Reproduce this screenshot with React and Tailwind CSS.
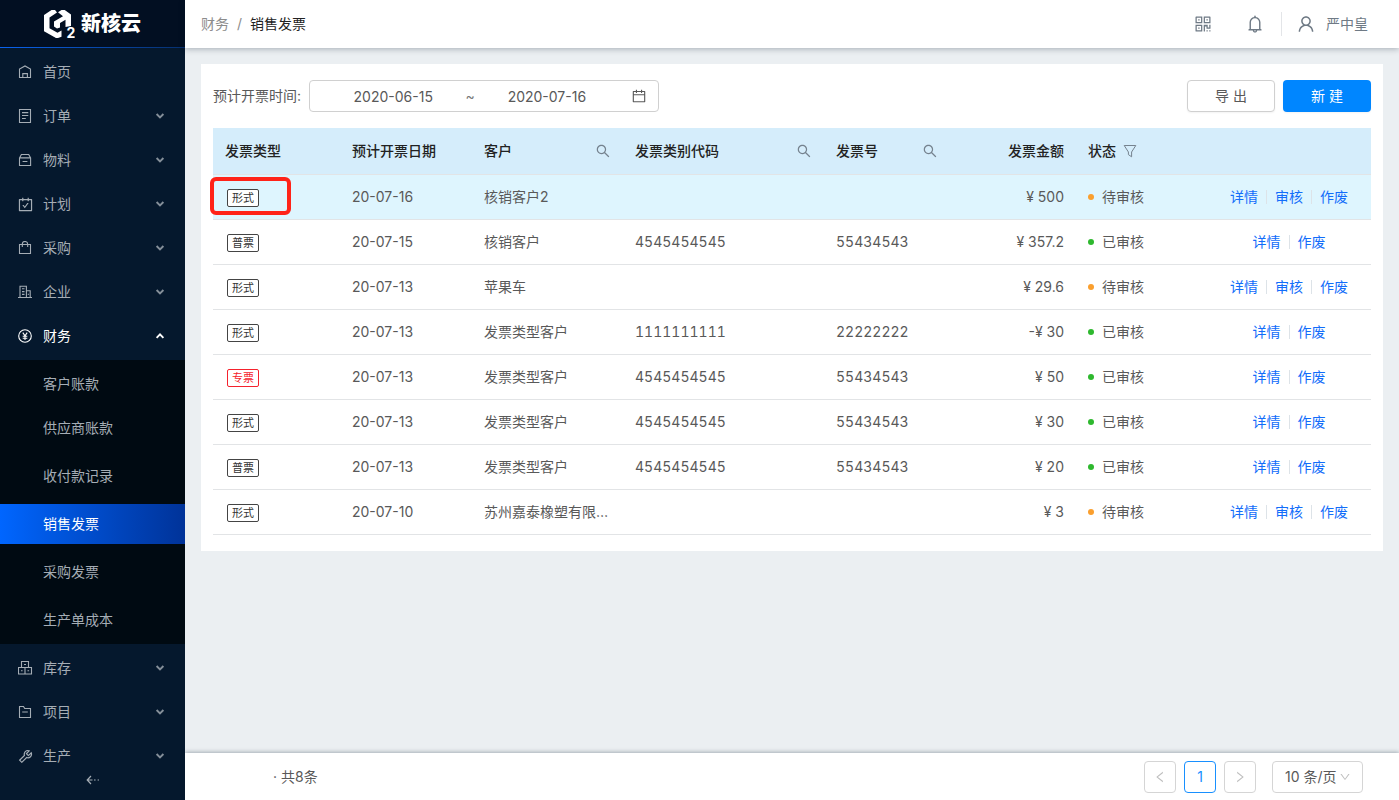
import React, { useState } from 'react';
import {
  AiOutlineBell,
  AiOutlineCalendar,
  AiOutlineCarryOut,
  AiOutlineDown,
  AiOutlineLeft,
  AiOutlineQrcode,
  AiOutlineRight,
  AiOutlineSearch,
  AiOutlineTool,
  AiOutlineUser,
} from 'react-icons/ai';

const LineIcon = ({ children }) => (
  <svg className="size-[15px]" viewBox="0 0 15 15" fill="none" stroke="currentColor" strokeWidth="1.1" aria-hidden="true">
    {children}
  </svg>
);

const icons = {
  home: (
    <LineIcon>
      <path d="M1.5 12.5V4.1L7 1l5.5 3.1v8.4zM4.8 12.5V8.6h4.6v3.9" />
    </LineIcon>
  ),
  order: (
    <LineIcon>
      <path d="M1.5.5h11v13h-11zM4 3.6h6.3M4 6.5h6.3M4 9.5h3.8" />
    </LineIcon>
  ),
  box: (
    <LineIcon>
      <path d="M1.5 4.9 3.4 1.5h7.3l1.9 3.4v7.6H1.5zM1.5 4.9h11M4.6 8.5h4.8" />
    </LineIcon>
  ),
  plan: <AiOutlineCarryOut className="-mx-px size-[17px]" />,
  bag: (
    <LineIcon>
      <path d="M1.5 3.5h11v9h-11zM4.3 6V3.2a2.7 2.7 0 0 1 5.4 0V6" />
    </LineIcon>
  ),
  company: (
    <LineIcon>
      <path d="M0 12.5h14M2 12.5V1.2h6.4v11.3M8.4 5.8h3.8v6.7M4 3.8h2.5M4 6.6h2.5M4 9.4h2.5M9.8 9.4h1" />
    </LineIcon>
  ),
  finance: (
    <LineIcon>
      <circle cx="7" cy="7" r="6.3" />
      <path d="M4.8 3.6 7 6.7l2.2-3.1M7 6.7V11M4.7 7.2h4.6M4.7 9.2h4.6" />
    </LineIcon>
  ),
  stock: (
    <LineIcon>
      <path d="M3.5.5h7v6h-7zM.5 6.5H7v6.5H.5zM7 6.5h6.5V13H7zM6 3.5h2M3 9.8h1.6M9.5 9.8h1.6" />
    </LineIcon>
  ),
  project: (
    <LineIcon>
      <path d="M1.5 12.5v-11h4l1.2 2h5.8v9zM4.2 7h5.6" />
    </LineIcon>
  ),
  tool: <AiOutlineTool className="-mx-px size-[17px]" />,
};

const menu = [
  { name: '首页', icon: 'home', leaf: true },
  { name: '订单', icon: 'order' },
  { name: '物料', icon: 'box' },
  { name: '计划', icon: 'plan' },
  { name: '采购', icon: 'bag' },
  { name: '企业', icon: 'company' },
  {
    name: '财务',
    icon: 'finance',
    children: ['客户账款', '供应商账款', '收付款记录', '销售发票', '采购发票', '生产单成本'],
  },
  { name: '库存', icon: 'stock' },
  { name: '项目', icon: 'project' },
  { name: '生产', icon: 'tool' },
];

const invoices = [
  { type: '形式', date: '20-07-16', customer: '核销客户2', code: '', number: '', amount: '¥ 500', pending: true },
  { type: '普票', date: '20-07-15', customer: '核销客户', code: '4545454545', number: '55434543', amount: '¥ 357.2' },
  { type: '形式', date: '20-07-13', customer: '苹果车', code: '', number: '', amount: '¥ 29.6', pending: true },
  { type: '形式', date: '20-07-13', customer: '发票类型客户', code: '1111111111', number: '22222222', amount: '-¥ 30' },
  { type: '专票', date: '20-07-13', customer: '发票类型客户', code: '4545454545', number: '55434543', amount: '¥ 50' },
  { type: '形式', date: '20-07-13', customer: '发票类型客户', code: '4545454545', number: '55434543', amount: '¥ 30' },
  { type: '普票', date: '20-07-13', customer: '发票类型客户', code: '4545454545', number: '55434543', amount: '¥ 20' },
  { type: '形式', date: '20-07-10', customer: '苏州嘉泰橡塑有限公司', code: '', number: '', amount: '¥ 3', pending: true },
];

const Logo = () => (
  <div className="flex h-12 shrink-0 items-center gap-1.5 bg-[#020f22] pl-[43px]">
    <svg className="h-8 w-8" viewBox="0 0 32 32" aria-hidden="true">
      <g fill="#fff">
        <path d="M1 7 8.5 2H12l2 2.4L6.5 9.5v10.8l8 4.4 4-2.2v6.2L15 30h-2L1 23.2z" />
        <path d="M15 4.2 18.5 2h3.2L28 6.6V18l-5.5 1v-7.2L17 15v4.6l-3 1-3-2v-5l9-5.4z" />
        <text x="23.5" y="30" fontSize="14" fontWeight="700">
          2
        </text>
      </g>
    </svg>
    <span className="text-xl leading-none font-black text-white">新核云</span>
  </div>
);

const Chevron = ({ open }) => (
  <svg
    className={`h-[6px] w-[10px] ${open ? '' : 'opacity-80'}`}
    viewBox="0 0 10 6"
    fill="none"
    stroke="currentColor"
    strokeWidth="1.9"
    aria-hidden="true"
  >
    <path d={open ? 'M1.6 4.8 5 1.4l3.4 3.4' : 'M1.6 1 5 4.4 8.4 1'} />
  </svg>
);

const Sidebar = ({ page, setPage }) => {
  const [open, setOpen] = useState('财务');

  return (
    <aside className="flex w-[185px] shrink-0 flex-col bg-[#05182d] text-[#a5adb5]">
      <div className="relative">
        <Logo />
        <div className="absolute inset-x-0 bottom-0 h-px bg-linear-to-r from-[#0a63f0] to-[#06306f]" />
      </div>
      <nav className="flex min-h-0 flex-1 flex-col overflow-hidden pt-1">
        {menu.map((item) => {
          const isOpen = item.children && open === item.name;
          return (
            <div key={item.name} className="shrink-0">
              <button
                type="button"
                onClick={() => setOpen(isOpen ? '' : item.name)}
                className={`mb-1 flex h-10 w-full items-center gap-2.5 pr-5 pl-[18px] text-left ${isOpen ? 'text-white' : ''}`}
              >
                {icons[item.icon]}
                <span className="flex-1">{item.name}</span>
                {!item.leaf && <Chevron open={isOpen} />}
              </button>
              {isOpen && (
                <ul className="mb-1 bg-[#000a12] py-1">
                  {item.children.map((child, i) => (
                    <li key={child} className={i === 0 ? 'mb-1' : 'mb-2 last:mb-0'}>
                      <button
                        type="button"
                        onClick={() => setPage(child)}
                        className={`h-10 w-full pl-[43px] text-left ${
                          child === page ? 'bg-linear-to-r from-[#0066ff] to-[#003399] text-white' : ''
                        }`}
                      >
                        {child}
                      </button>
                    </li>
                  ))}
                </ul>
              )}
            </div>
          );
        })}
      </nav>
      <button type="button" aria-label="收起菜单" className="flex h-8 shrink-0 items-center justify-center pb-2">
        <svg className="h-3 w-[14px]" viewBox="0 0 14 12" fill="none" stroke="currentColor" strokeWidth="1.2" aria-hidden="true">
          <path d="M5 2 1.2 6 5 10M1.5 6h5M8 6h1.6M11.6 6H13" />
        </svg>
      </button>
    </aside>
  );
};

const Header = ({ page }) => (
  <header className="z-10 flex h-12 shrink-0 items-center justify-between bg-white pr-[15px] pl-4 shadow-[0_1px_6px_rgba(0,21,41,0.3)]">
    <nav className="flex gap-2 text-[#8c8c8c]">
      <a href="#finance">财务</a>
      <span>/</span>
      <span className="text-[#222]">{page}</span>
    </nav>
    <div className="flex items-center text-[#6f7a85]">
      <button type="button" aria-label="二维码">
        <AiOutlineQrcode className="size-5" />
      </button>
      <button type="button" aria-label="通知" className="ml-8">
        <AiOutlineBell className="size-5" />
      </button>
      <span className="ml-4 h-6 w-px bg-[#e3e5e8]" />
      <a href="#user" className="mr-4 ml-3.5 flex items-center gap-2.5">
        <AiOutlineUser className="size-5" />
        严中皇
      </a>
    </div>
  </header>
);

const Th = ({ children, search }) => (
  <th className="h-[46px] px-3 text-left font-medium">
    <div className="flex items-center justify-between">
      {children}
      {search && (
        <button type="button" aria-label={`搜索${children}`} className="text-[#75828e]">
          <AiOutlineSearch className="size-4" />
        </button>
      )}
    </div>
  </th>
);

const Row = ({ invoice, active }) => {
  const actions = invoice.pending ? ['详情', '审核', '作废'] : ['详情', '作废'];
  const tagColor = invoice.type === '专票' ? 'border-[#f5222d] text-[#f5222d]' : 'border-[#444] text-[#333]';

  return (
    <tr className={`h-[45px] border-b border-[#e2e4e6] ${active ? 'bg-[#def5fe]' : ''}`}>
      <td className="relative px-3">
        <span className={`mt-0.5 ml-0.5 flex h-[18px] w-8 items-center justify-center rounded-xs border bg-white pt-0.5 text-[11px] leading-none ${tagColor}`}>
          {invoice.type}
        </span>
        {active && <span className="pointer-events-none absolute top-0.5 -left-[3px] h-[38px] w-[81px] rounded-md border-4 border-[#ff2318]" />}
      </td>
      <td className="px-3">{invoice.date}</td>
      <td className="truncate px-3">{invoice.customer}</td>
      <td className="px-3 tabular-nums">{invoice.code}</td>
      <td className="px-3 tabular-nums">{invoice.number}</td>
      <td className="px-3 text-right">{invoice.amount}</td>
      <td className="px-3">
        <span className="flex items-center gap-2">
          <i className={`size-1.5 rounded-full ${invoice.pending ? 'bg-[#fa9f2e]' : 'bg-[#2eb82e]'}`} />
          {invoice.pending ? '待审核' : '已审核'}
        </span>
      </td>
      <td>
        <div className="flex items-center justify-center">
          {actions.map((action, i) => (
            <React.Fragment key={action}>
              {i > 0 && <span className="mx-2 h-3.5 w-px bg-[#dde3e8]" />}
              <a href="#invoice" className="text-[#126dfa]">
                {action}
              </a>
            </React.Fragment>
          ))}
        </div>
      </td>
    </tr>
  );
};

const InvoiceTable = () => (
  <table className="mt-4 w-full table-fixed border-collapse">
    <colgroup>
      <col className="w-[127px]" />
      <col className="w-[132px]" />
      <col className="w-[151px]" />
      <col className="w-[201px]" />
      <col className="w-[126px]" />
      <col className="w-[126px]" />
      <col className="w-[131px]" />
      <col className="w-[164px]" />
    </colgroup>
    <thead>
      <tr className="border-b border-[#e2e4e6] bg-[#d5edfb] text-[#222]">
        <Th>发票类型</Th>
        <Th>预计开票日期</Th>
        <Th search>客户</Th>
        <Th search>发票类别代码</Th>
        <Th search>发票号</Th>
        <th className="px-3 text-right font-medium">发票金额</th>
        <th className="px-3 font-medium">
          <div className="flex items-center gap-[7px]">
            状态
            <button type="button" aria-label="筛选状态" className="text-[#75828e]">
              <svg className="size-3.5" viewBox="0 0 14 14" fill="none" stroke="currentColor" aria-hidden="true">
                <path d="M1.2 1.5h11.6L8.6 8v4.8L5.4 10.6V8z" strokeLinejoin="round" />
              </svg>
            </button>
          </div>
        </th>
        <th aria-label="操作" />
      </tr>
    </thead>
    <tbody>
      {invoices.map((invoice, i) => (
        <Row key={i} invoice={invoice} active={i === 0} />
      ))}
    </tbody>
  </table>
);

const Toolbar = () => (
  <div className="flex items-center">
    <label htmlFor="start-date">预计开票时间:</label>
    <div className="ml-2 flex h-8 w-[350px] items-center rounded border border-[#d0d0d0] px-[11px]">
      <input id="start-date" defaultValue="2020-06-15" className="h-full w-0 flex-1 text-center outline-none" />
      <span className="text-[#777]">~</span>
      <input aria-label="结束时间" defaultValue="2020-07-16" className="h-full w-0 flex-1 text-center outline-none" />
      <AiOutlineCalendar className="ml-3 size-4" />
    </div>
    <div className="ml-auto flex gap-2">
      <button type="button" className="h-8 w-[88px] rounded border border-[#d0d0d0] bg-white shadow-xs">
        导 出
      </button>
      <button type="button" className="h-8 w-[88px] rounded bg-[#0086ff] text-white shadow-xs">
        新 建
      </button>
    </div>
  </div>
);

const Footer = () => (
  <footer className="z-10 flex h-[47px] shrink-0 items-start justify-between bg-white pt-2 pr-9 pl-[88px] shadow-[0_-1px_4px_rgba(0,21,41,0.3)]">
    <span className="leading-8">· 共8条</span>
    <div className="flex gap-2">
      <button type="button" aria-label="上一页" className="flex size-8 items-center justify-center rounded border border-[#d5d5d5] text-[#bfbfbf]">
        <AiOutlineLeft className="size-3.5" />
      </button>
      <button type="button" className="size-8 rounded border border-[#1890ff] text-[#1890ff]">
        1
      </button>
      <button type="button" aria-label="下一页" className="flex size-8 items-center justify-center rounded border border-[#d5d5d5] text-[#bfbfbf]">
        <AiOutlineRight className="size-3.5" />
      </button>
      <div className="relative ml-2">
        <select aria-label="每页条数" className="h-8 w-[91px] appearance-none rounded border border-[#d5d5d5] bg-white pl-3">
          <option>10 条/页</option>
          <option>20 条/页</option>
          <option>50 条/页</option>
        </select>
        <AiOutlineDown className="pointer-events-none absolute top-2.5 right-3 size-3 text-[#bfbfbf]" />
      </div>
    </div>
  </footer>
);

const App = () => {
  const [page, setPage] = useState('销售发票');

  return (
    <div className="flex h-screen overflow-hidden bg-[#ebeff2] font-[Inter,'Noto_Sans_CJK_SC',sans-serif] text-sm text-[#595959]">
      <Sidebar page={page} setPage={setPage} />
      <div className="flex min-w-0 flex-1 flex-col">
        <Header page={page} />
        <main className="min-h-0 flex-1 overflow-auto p-4">
          <section className="bg-white px-3 py-4">
            <Toolbar />
            <InvoiceTable />
          </section>
        </main>
        <Footer />
      </div>
    </div>
  );
};

export default App;
